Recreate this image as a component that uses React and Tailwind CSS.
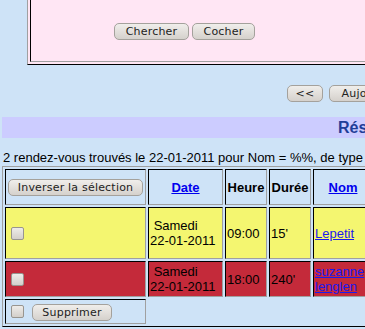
import React from "react";

const Btn = ({ children, className = "" }) => (
  <button
    type="button"
    className={`flex h-[17px] shrink-0 items-center justify-center rounded-[5px] border border-[#a4a19c] bg-linear-to-b from-[#f0eeeb] to-[#d5d1cc] font-['DejaVu_Sans',sans-serif] text-[11px] font-normal leading-none tracking-[0.2px] text-[#222] ${className}`}
  >
    {children}
  </button>
);

const Check = () => (
  <span className="ml-[4px] inline-block h-[13px] w-[13px] shrink-0 rounded-[2px] border border-[#98958f] bg-linear-to-b from-[#eeece9] to-[#d3cfca] align-middle" />
);

const cell =
  "border border-t-black border-l-black border-r-[#a0a0a0] border-b-[#a0a0a0] p-[1px] align-middle";

const rows = [
  { bg: "bg-[#f4f670]", h: "h-[52px]", heure: "09:00", duree: "15'", nom: "Lepetit", type: "RDV" },
  { bg: "bg-[#c42a3a]", h: "h-[36px]", heure: "18:00", duree: "240'", nom: "suzanne lenglen", type: "RDV" },
];

export default function App() {
  return (
    <div className="h-[329px] w-[365px] overflow-hidden bg-[#cee3f7] font-['Liberation_Sans',Arial,sans-serif] text-[13px] leading-[15px] text-black">
      {/* search box */}
      <div className="pl-[27px]">
        <div className="w-[600px] border-r border-b border-l border-r-black border-b-black border-l-[#a0a0a0] bg-[#ffe6f4] pr-[2px] pb-[2px] pl-[2px]">
          <div className="flex h-[62px] gap-[3px] border-r border-b border-l border-r-[#a0a0a0] border-b-[#a0a0a0] border-l-black pt-[23px] pl-[83px]">
            <Btn className="w-[75px]">Chercher</Btn>
            <Btn className="w-[63px]">Cocher</Btn>
          </div>
        </div>
      </div>

      {/* navigation */}
      <div className="mt-[20px] flex gap-[6px] pl-[287px]">
        <Btn className="w-[36px]">&lt;&lt;</Btn>
        <Btn className="w-[90px]">Aujourd'hui</Btn>
        <Btn className="w-[36px]">&gt;&gt;</Btn>
      </div>

      {/* results band */}
      <div className="mt-[15px] ml-[2px] flex h-[21px] w-[600px] items-center bg-[#ccccff] pl-[336px]">
        <span className="text-[16px] font-bold text-[#1f3e98]">Résultats</span>
      </div>

      <p className="mt-[12px] whitespace-nowrap pl-[3px]">
        2 rendez-vous trouvés le 22-01-2011 pour Nom = %%, de type
      </p>

      <table className="mt-[1px] ml-[2px] w-[456px] table-fixed border-separate border-spacing-[2px] border border-t-[#a0a0a0] border-l-[#a0a0a0] border-r-black border-b-black">
        <thead>
          <tr>
            <th className={`${cell} h-[36px] w-[141px]`}>
              <Btn className="ml-[1px] w-[135px]">Inverser la sélection</Btn>
            </th>
            <th className={`${cell} w-[75px] text-center font-bold`}>
              <a href="#" className="text-[#0000ee] underline">Date</a>
            </th>
            <th className={`${cell} w-[42px] text-center font-bold`}>Heure</th>
            <th className={`${cell} w-[42px] text-center font-bold`}>Durée</th>
            <th className={`${cell} w-[60px] text-center font-bold`}>
              <a href="#" className="text-[#0000ee] underline">Nom</a>
            </th>
            <th className={`${cell} w-[80px] text-center font-bold`}>Type</th>
          </tr>
        </thead>
        <tbody>
          {rows.map((r) => (
            <tr key={r.heure}>
              <td className={`${cell} ${r.bg} ${r.h}`}>
                <div className="flex items-center">
                  <Check />
                </div>
              </td>
              <td className={`${cell} ${r.bg} text-left`}>
                {"\u00a0"}Samedi
                <br />
                22-01-2011
              </td>
              <td className={`${cell} ${r.bg}`}>{r.heure}</td>
              <td className={`${cell} ${r.bg}`}>{r.duree}</td>
              <td className={`${cell} ${r.bg}`}>
                <a href="#" className="text-[#1a1aee] underline">{r.nom}</a>
              </td>
              <td className={`${cell} ${r.bg}`}>{r.type}</td>
            </tr>
          ))}
          <tr>
            <td className={`${cell} h-[25px]`}>
              <div className="flex items-center gap-[8px]">
                <Check />
                <Btn className="mt-[2px] w-[80px]">Supprimer</Btn>
              </div>
            </td>
          </tr>
        </tbody>
      </table>
    </div>
  );
}
